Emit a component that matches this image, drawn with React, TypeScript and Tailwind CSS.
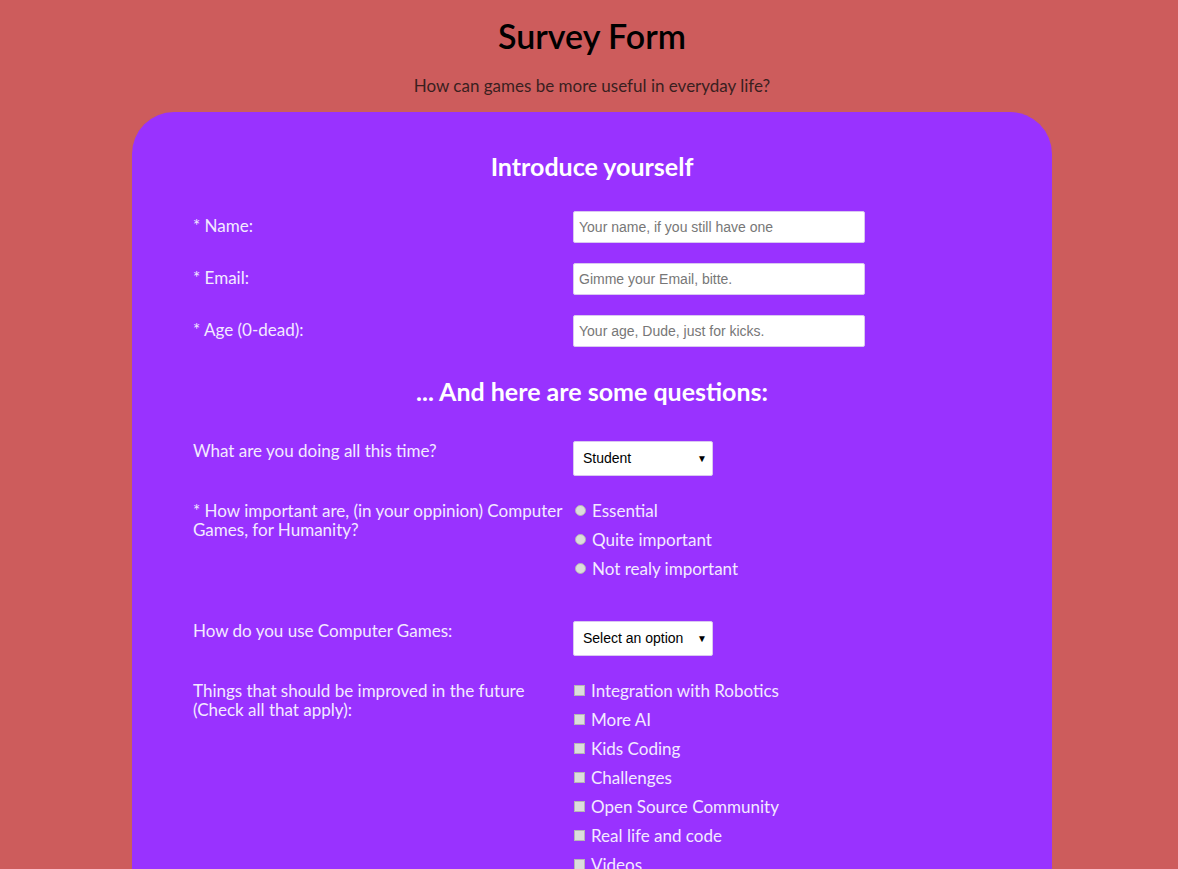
import { useState } from "react";

const labelCls = "text-[17px] leading-[19px] text-[#f3eaff]";
const inputCls =
    "w-[292px] h-[32px] bg-white border border-[#d9c7f0] rounded-[2px] px-[5px] text-[14px] text-[#333] placeholder:text-[#777] font-['Liberation_Sans',sans-serif] outline-none";

const improvements = [
    "Integration with Robotics",
    "More AI",
    "Kids Coding",
    "Challenges",
    "Open Source Community",
    "Real life and code",
    "Videos",
];

function Dropdown({ options }: { options: string[] }) {
    return (
        <div className="relative w-[140px] h-[35px]">
            <select className="appearance-none w-full h-full bg-white border border-[#d9c7f0] rounded-[2px] pl-[9px] text-[14px] text-black font-['Liberation_Sans',sans-serif] outline-none">
                {options.map((o) => (
                    <option key={o}>{o}</option>
                ))}
            </select>
            <span className="pointer-events-none absolute right-[6px] top-[10px] text-[10px] text-black">▼</span>
        </div>
    );
}

function App() {
    const [importance, setImportance] = useState("");
    const [checked, setChecked] = useState<string[]>([]);

    const toggle = (item: string) => {
        setChecked((c) => (c.includes(item) ? c.filter((x) => x !== item) : [...c, item]));
    };

    return (
        <div className="min-h-screen bg-[#cd5c5c] font-['Lato',sans-serif] pl-[6px] pb-10">
            <header className="text-center pt-[15px]">
                <h1 className="text-[34px] leading-[42px] font-semibold text-black">Survey Form</h1>
                <p className="mt-[19px] text-[17px] leading-[20px] text-[#3a1f1f]">
                    How can games be more useful in everyday life?
                </p>
            </header>

            <form className="mx-auto mt-[16px] w-[920px] bg-[#9932ff] rounded-t-[42px] pl-[61px] pr-[61px] pt-[39px] pb-16">
                <h2 className="text-center text-[25px] leading-[30px] font-bold text-white">Introduce yourself</h2>

                <div className="mt-[30px] grid grid-cols-[370px_1fr] gap-x-[10px] gap-y-5">
                    <label className={`${labelCls} pt-[5px]`}>* Name:</label>
                    <input className={inputCls} placeholder="Your name, if you still have one" />
                    <label className={`${labelCls} pt-[5px]`}>* Email:</label>
                    <input className={inputCls} placeholder="Gimme your Email, bitte." />
                    <label className={`${labelCls} pt-[5px]`}>* Age (0-dead):</label>
                    <input className={inputCls} placeholder="Your age, Dude, just for kicks." />
                </div>

                <h2 className="mt-[29px] text-center text-[25px] leading-[30px] font-bold text-white">
                    ... And here are some questions:
                </h2>

                <div className="mt-[35px] grid grid-cols-[370px_1fr] gap-x-[10px]">
                    <label className={`${labelCls} pr-[10px]`}>What are you doing all this time?</label>
                    <Dropdown options={["Student", "Working", "Retired", "Other"]} />

                    <label className={`${labelCls} mt-[25px]`}>
                        * How important are, (in your oppinion) Computer Games, for Humanity?
                    </label>
                    <div className="mt-[25px] flex flex-col gap-[10px]">
                        {["Essential", "Quite important", "Not realy important"].map((opt) => (
                            <label key={opt} className={`${labelCls} flex items-center gap-[6px] pl-[2px]`}>
                                <input
                                    type="radio"
                                    name="importance"
                                    checked={importance === opt}
                                    onChange={() => setImportance(opt)}
                                    className="appearance-none w-[11px] h-[11px] rounded-full border border-[#b5b5b5] bg-[#dcdcdc] checked:bg-[#555]"
                                />
                                {opt}
                            </label>
                        ))}
                    </div>

                    <label className={`${labelCls} mt-[43px]`}>How do you use Computer Games:</label>
                    <div className="mt-[43px]">
                        <Dropdown options={["Select an option", "Fun", "Learning", "Work"]} />
                    </div>

                    <label className={`${labelCls} mt-[25px] pr-[10px]`}>
                        Things that should be improved in the future (Check all that apply):
                    </label>
                    <div className="mt-[25px] flex flex-col gap-[10px]">
                        {improvements.map((item) => (
                            <label key={item} className={`${labelCls} flex items-center gap-[6px] pl-[1px]`}>
                                <input
                                    type="checkbox"
                                    checked={checked.includes(item)}
                                    onChange={() => toggle(item)}
                                    className="appearance-none w-[11px] h-[11px] border border-[#b5b5b5] bg-[#dcdcdc] checked:bg-[#555]"
                                />
                                {item}
                            </label>
                        ))}
                    </div>

                    <label className={`${labelCls} mt-[30px]`}>Any comments or suggestions?</label>
                    <textarea className="mt-[30px] w-[292px] h-[100px] bg-white border border-[#d9c7f0] rounded-[2px] p-[5px] text-[14px] font-['Liberation_Sans',sans-serif]" placeholder="Enter your comment here..." />
                </div>

                <div className="mt-10 text-center">
                    <button type="button" className="bg-white text-[#9932ff] text-[17px] font-bold px-8 py-2 rounded-full">
                        Submit
                    </button>
                </div>
            </form>
        </div>
    );
}

export default App;
